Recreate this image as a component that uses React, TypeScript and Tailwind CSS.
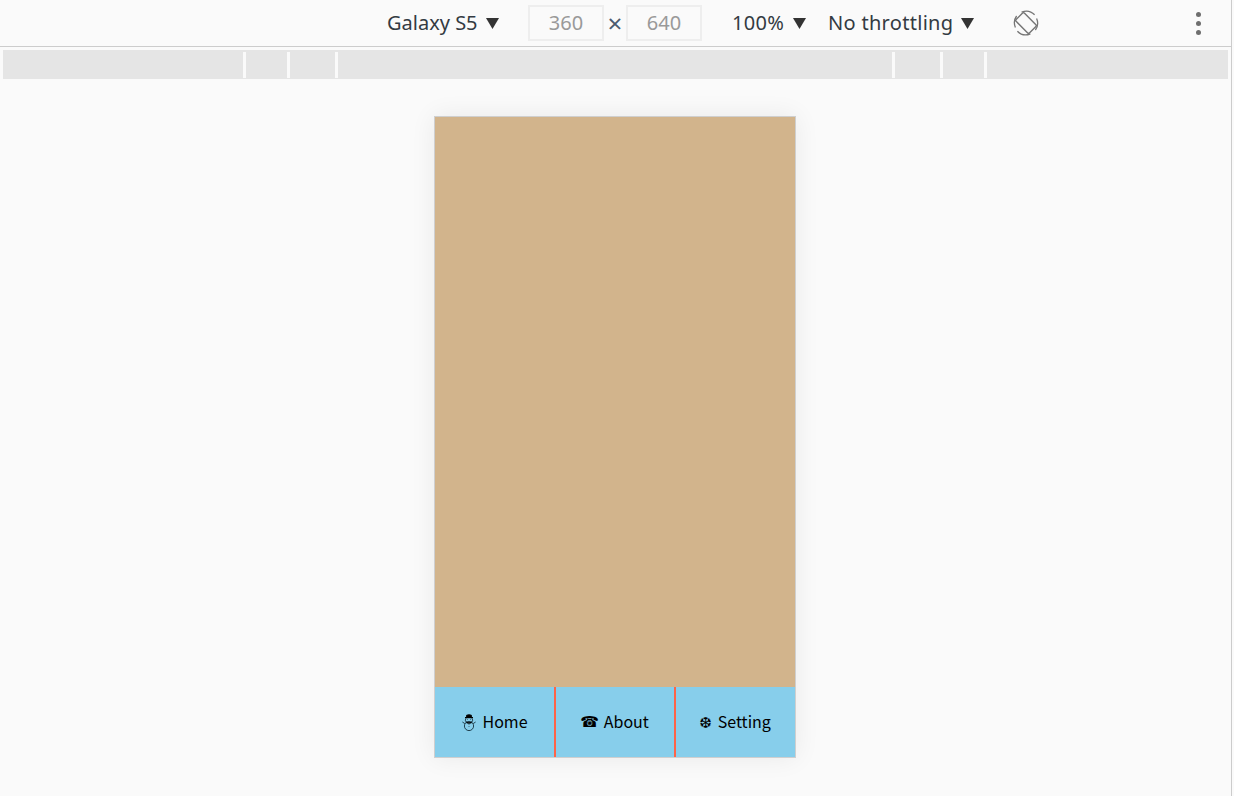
// App.tsx
import React from 'react';

const Caret = () => (
  <svg width="13" height="11" viewBox="0 0 13 11" className="shrink-0">
    <polygon points="0,0 13,0 6.5,11" fill="#333333" />
  </svg>
);

const RotateIcon = () => (
  <svg width="26" height="26" viewBox="0 0 26 26" fill="none" stroke="#757575">
    <rect x="7.2" y="3.6" width="11.6" height="18.8" rx="1.2" transform="rotate(-45 13 13)" strokeWidth="1.4" />
    <path d="M2.4 17.4A11.6 11.6 0 0 1 3.6 6" strokeWidth="1.3" />
    <path d="M8.6 2.2A11.6 11.6 0 0 1 21.6 4.8" strokeWidth="1.3" />
    <path d="M23.6 8.6A11.6 11.6 0 0 1 22.4 20" strokeWidth="1.3" />
    <path d="M17.4 23.8A11.6 11.6 0 0 1 4.4 21.2" strokeWidth="1.3" />
  </svg>
);

const SnowmanIcon = () => (
  <svg width="14" height="17" viewBox="0 0 14 17" fill="none" stroke="#16323f" strokeWidth="0.9" className="ml-[2px] shrink-0">
    <path d="M4.6 3.2V1.2Q7 .2 9.4 1.2V3.2Z" fill="#000000" stroke="#000000" />
    <path d="M3 3.6H11" stroke="#000000" strokeWidth="1.2" />
    <path d="M4 4.2A3.3 3.3 0 0 0 4.2 8.2M10 4.2A3.3 3.3 0 0 1 9.8 8.2" />
    <path d="M5.4 5.4H5.9M8.1 5.4H8.6" stroke="#000000" />
    <path d="M4 8.2Q7 10 10 8.2" stroke="#000000" strokeWidth="1.5" />
    <circle cx="7" cy="12" r="4.6" />
    <path d="M2.8 9.6L.4 8M11.2 9.6L13.6 8" />
    <path d="M7 10.2V10.7M7 12.4V12.9" stroke="#000000" />
  </svg>
);

const navItems = [
  { icon: <SnowmanIcon />, label: 'Home', className: 'w-[121px] gap-[6px] border-r-2 border-[#ff6347]' },
  { icon: <span className="font-['DejaVu_Sans',sans-serif] text-[15px] leading-none">☎</span>, label: 'About', className: 'w-[120px] gap-[5px] border-r-2 border-[#ff6347]' },
  { icon: <span className="mt-[2px] font-['DejaVu_Sans',sans-serif] text-[15px] leading-none">❆</span>, label: 'Setting', className: 'w-[119px] gap-[6px]' },
];

const rulerWidths = [243, 44, 48, 557, 48, 44, 241];

export default function App() {
  return (
    <div className="flex h-[796px] w-[1234px] overflow-hidden bg-[#fafafa] font-['Noto_Sans',sans-serif]">
      <div className="flex w-[1232px] flex-col border-r border-[#cccccc]">
        {/* device toolbar */}
        <div className="flex h-[47px] shrink-0 items-center border-b border-[#cccccc] text-[20px] text-[#333a42]">
          <div className="ml-[387px] flex w-[112px] items-center justify-between">
            <span>Galaxy S5</span>
            <Caret />
          </div>
          <div className="ml-[29px] flex h-[36px] w-[76px] items-center justify-center border-2 border-[#eeeeee] text-[#999999]">360</div>
          <span className="w-[22px] text-center text-[26px] leading-none text-[#4a5a70]">×</span>
          <div className="flex h-[36px] w-[76px] items-center justify-center border-2 border-[#eeeeee] text-[#999999]">640</div>
          <div className="ml-[30px] flex w-[74px] items-center justify-between tracking-[0.3px]">
            <span>100%</span>
            <Caret />
          </div>
          <div className="ml-[22px] flex w-[146px] items-center justify-between tracking-[0.3px]">
            <span>No throttling</span>
            <Caret />
          </div>
          <div className="ml-[39px]">
            <RotateIcon />
          </div>
          <div className="ml-[157px] flex flex-col gap-[4px]">
            <span className="h-[5px] w-[5px] rounded-full bg-[#6e6e6e]" />
            <span className="h-[5px] w-[5px] rounded-full bg-[#6e6e6e]" />
            <span className="h-[5px] w-[5px] rounded-full bg-[#6e6e6e]" />
          </div>
        </div>

        {/* media query ruler */}
        <div className="mx-[3px] mt-[3px] flex h-[29px] w-[1225px] shrink-0 items-center bg-[#e5e5e5]">
          {rulerWidths.map((w, i) => (
            <div
              key={i}
              style={{ width: w }}
              className={`h-[26px] shrink-0 ${i < rulerWidths.length - 1 ? 'border-r-[3px] border-[#fafafa]' : ''}`}
            />
          ))}
        </div>

        {/* emulated device */}
        <div className="flex flex-1 justify-center">
          <div className="ml-[-2px] mt-[37px] flex h-[642px] w-[362px] flex-col border border-[#cfcfcf] shadow-[0_0_24px_rgba(0,0,0,0.07)]">
            <div className="flex-1 bg-[#d2b48c]" />
            <div className="flex h-[70px] bg-[#87ceeb]">
              {navItems.map((item) => (
                <div
                  key={item.label}
                  className={`flex items-center justify-center text-black ${item.className}`}
                >
                  {item.icon}
                  <span className="mb-[2px] font-['Noto_Sans_CJK_SC','Noto_Sans',sans-serif] text-[16px]">{item.label}</span>
                </div>
              ))}
            </div>
          </div>
        </div>
      </div>
    </div>
  );
}
